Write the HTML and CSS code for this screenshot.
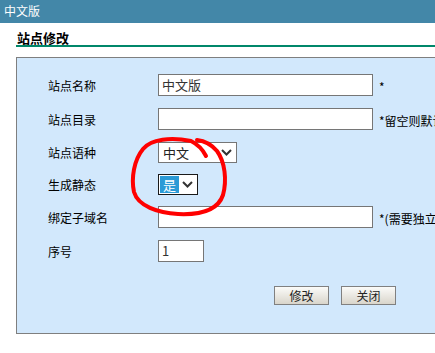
FILE: index.html
```html
<!DOCTYPE html>
<html lang="zh">
<head>
<meta charset="utf-8">
<title>站点修改</title>
<link rel="stylesheet" href="styles.css">
</head>
<body>
<div class="topbar">中文版</div>
<div class="heading"><span>站点修改</span></div>
<div class="panel">
  <div class="row">
    <div class="label">站点名称</div>
    <div class="field"><div class="input wide">中文版</div><span class="note">*</span></div>
  </div>
  <div class="row">
    <div class="label">站点目录</div>
    <div class="field"><div class="input wide"></div><span class="note">*留空则默认为站点名称</span></div>
  </div>
  <div class="row short">
    <div class="label">站点语种</div>
    <div class="field">
      <div class="select lang"><span class="opt">中文</span>
        <svg class="chev" width="11" height="7" viewBox="0 0 11 7"><path d="M1 1 L5.5 5.5 L10 1" fill="none" stroke="#333" stroke-width="2"/></svg>
      </div>
    </div>
  </div>
  <div class="row short">
    <div class="label">生成静态</div>
    <div class="field">
      <div class="select focus"><span class="opt sel">是</span>
        <svg class="chev" width="11" height="7" viewBox="0 0 11 7"><path d="M1 1 L5.5 5.5 L10 1" fill="none" stroke="#333" stroke-width="2"/></svg>
      </div>
    </div>
  </div>
  <div class="row">
    <div class="label">绑定子域名</div>
    <div class="field"><div class="input wide"></div><span class="note">*(需要独立域名)</span></div>
  </div>
  <div class="row">
    <div class="label">序号</div>
    <div class="field"><div class="input small">1</div></div>
  </div>
  <div class="buttons">
    <button class="btn">修改</button>
    <button class="btn">关闭</button>
  </div>
</div>
<svg class="scribble" width="435" height="353" viewBox="0 0 435 353">
  <path d="M206 156 Q201 146 191 141 C171 137 151 139 143 149 C134 160 131 178 134 192 C138 206 158 213 178 214 C200 215 218 210 223 195 C227 180 225 162 217 151 C212 145 205 141 197 140" fill="none" stroke="#ff0000" stroke-width="4" stroke-linecap="round" stroke-linejoin="round"/>
</svg>
</body>
</html>
```

FILE: styles.css
```css
html, body {
  margin: 0;
  padding: 0;
  overflow: hidden;
  background: #ffffff;
}
body {
  width: 435px;
  height: 353px;
  position: relative;
  font-family: "Noto Sans CJK SC", "Liberation Sans", sans-serif;
  font-size: 12px;
  color: #000;
}
.topbar {
  height: 23px;
  line-height: 22px;
  background: #4387a8;
  color: #fff;
  font-size: 12px;
  padding-left: 4px;
}
.heading {
  margin: 7px 0 0 16px;
  width: 600px;
  padding-left: 1px;
  height: 15px;
  line-height: 15px;
  border-bottom: 2px solid #00876a;
  font-size: 13px;
  font-weight: bold;
}
.panel {
  margin: 10px 0 0 16px;
  width: 600px;
  border: 1px solid #7f7f7f;
  background: #d2e8fc;
  padding: 10px 0 28px 31px;
}
.row {
  display: flex;
  align-items: center;
  height: 34px;
}
.row.short {
  height: 32px;
}
.label {
  width: 110px;
  flex: none;
}
.field {
  display: flex;
  align-items: center;
  gap: 6px;
}
.input {
  box-sizing: border-box;
  height: 22px;
  border: 1px solid #767676;
  background: #fff;
  font-size: 13px;
  color: #333;
  line-height: 20px;
  padding-left: 3px;
}
.input.wide {
  width: 215px;
}
.input.small {
  width: 46px;
}
.note {
  white-space: nowrap;
  font-size: 12px;
  padding-top: 3px;
}
.select {
  box-sizing: border-box;
  height: 21px;
  border: 1px solid #767676;
  background: #fff;
  display: flex;
  align-items: center;
  justify-content: space-between;
  font-size: 13px;
  color: #222;
}
.select.lang {
  width: 79px;
  padding: 0 4px 0 4px;
}
.select.focus {
  width: 40px;
  border-color: #1a1a1a;
  padding: 1px 4px 1px 1px;
  align-items: stretch;
}
.opt {
  line-height: 19px;
}
.opt.sel {
  background: #2b9ad6;
  color: #fff;
  width: 19px;
  text-align: center;
  line-height: 17px;
}
.chev {
  align-self: center;
}
.buttons {
  display: flex;
  gap: 12px;
  margin: 18px 0 0 226px;
}
.btn {
  box-sizing: border-box;
  width: 55px;
  height: 19px;
  padding: 0;
  border: 1px solid #808080;
  background: linear-gradient(#fbfbf9, #d9d5cb);
  font-family: "Noto Sans CJK SC", "Liberation Sans", sans-serif;
  font-size: 12px;
  line-height: 17px;
  color: #222;
}
.scribble {
  position: absolute;
  left: 0;
  top: 0;
  pointer-events: none;
}
```
